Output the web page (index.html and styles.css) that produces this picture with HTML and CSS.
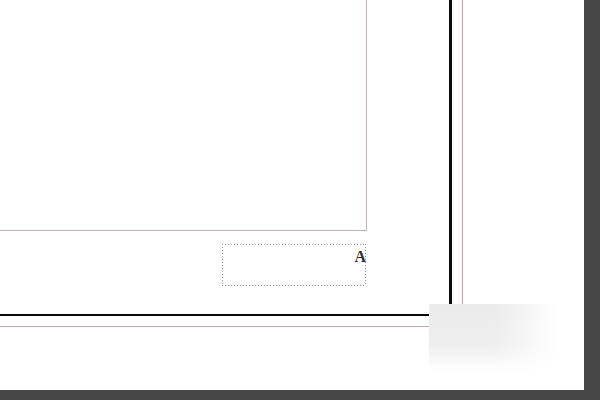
FILE: index.html
```html
<!DOCTYPE html>
<html>
<head>
<meta charset="utf-8">
<link rel="stylesheet" href="styles.css">
</head>
<body>
<div class="page">
  <div class="bleed">
    <div class="trim">
      <div class="frame"></div>
      <div class="textbox"><span class="glyph">A</span></div>
    </div>
  </div>
  <div class="smudge"></div>
</div>
</body>
</html>
```
FILE: styles.css
```css
html, body {
  margin: 0;
  padding: 0;
}
body {
  background: #474747;
  width: 600px;
  height: 400px;
  overflow: hidden;
}
.page {
  position: relative;
  width: 584px;
  height: 390px;
  background: #ffffff;
}
.bleed {
  width: 462px;
  height: 326px;
  border-right: 1px solid #c6a6ae;
  border-bottom: 1px solid #c6a6ae;
}
.trim {
  width: 449px;
  height: 314px;
  border-right: 3px solid #0a0a0a;
  border-bottom: 2px solid #0a0a0a;
  display: flex;
  flex-direction: column;
}
.frame {
  width: 366px;
  height: 230px;
  border-right: 1px solid #bdb2b7;
  border-bottom: 1px solid #bdb2b7;
  flex: none;
}
.textbox {
  margin-top: 13px;
  margin-left: 222px;
  width: 144px;
  height: 42px;
  box-sizing: border-box;
  background:
    repeating-linear-gradient(to right, #9c9c9c 0 1px, transparent 1px 3px) left top / 100% 1px no-repeat,
    repeating-linear-gradient(to right, #9c9c9c 0 1px, transparent 1px 3px) left bottom / 100% 1px no-repeat,
    repeating-linear-gradient(to bottom, #9c9c9c 0 1px, transparent 1px 3px) left top / 1px 100% no-repeat,
    repeating-linear-gradient(to bottom, #9c9c9c 0 1px, transparent 1px 3px) right top / 1px 100% no-repeat;
  display: flex;
  justify-content: flex-end;
  align-items: flex-start;
  flex: none;
}
.glyph {
  font-family: "Liberation Serif", "Times New Roman", serif;
  font-size: 16px;
  font-weight: bold;
  color: #303030;
  line-height: 16px;
  margin-top: 5px;
  margin-right: 0;
}
.smudge {
  position: absolute;
  left: 429px;
  top: 304px;
  width: 128px;
  height: 68px;
  background:
    linear-gradient(to right, rgba(255,255,255,0) 50%, #ffffff 100%),
    linear-gradient(to bottom, #eaeaea 0%, #eeeeee 60%, #ffffff 100%);
}
```
